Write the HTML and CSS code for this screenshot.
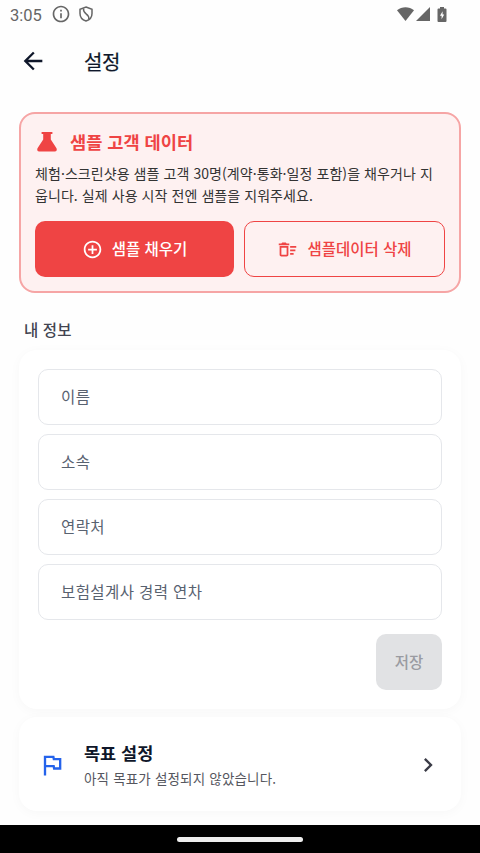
FILE: index.html
```html
<!DOCTYPE html>
<html lang="ko">
<head>
<meta charset="utf-8">
<title>설정</title>
<link rel="stylesheet" href="styles.css">
</head>
<body>
<div class="screen">
  <div class="status">
    <span class="clock">3:05</span>
    <svg class="st-info" viewBox="0 0 24 24"><path d="M11 7h2v2h-2zm0 4h2v6h-2zm1-9C6.480 2 2 6.480 2 12s4.480 10 10 10 10-4.480 10-10S17.520 2 12 2zm0 18c-4.410 0-8-3.590-8-8s3.590-8 8-8 8 3.590 8 8-3.590 8-8 8z"/></svg>
    <svg class="st-shield" viewBox="0 0 14 16"><path d="M7 1 13 3.200V7.500C13 11 10.500 14 7 15 3.500 14 1 11 1 7.500V3.200Z"/><path d="M4.600 2.500C3.400 8.500 10.600 7 9.800 13"/></svg>
    <span class="spacer"></span>
    <svg class="st-wifi" viewBox="0 0 17 14"><path d="M0 3.300C4.800-.9 12.200-.9 17 3.300L8.500 14Z"/></svg>
    <svg class="st-signal" viewBox="0 0 14 14"><path d="M14 0v14H0Z"/></svg>
    <svg class="st-battery" viewBox="0 0 10 15"><path fill-rule="evenodd" d="M3 0h4v1.500h1.500q1 0 1 1V14q0 1-1 1h-7q-1 0-1-1V2.500q0-1 1-1H3ZM5.600 4.200 3 8.800h1.600v3.400L7.200 7.600H5.600Z"/></svg>
  </div>
  <header class="appbar">
    <svg class="back" viewBox="0 0 24 24"><path d="M20 11H7.830l5.590-5.590L12 4l-8 8 8 8 1.410-1.410L7.830 13H20v-2z"/></svg>
    <h1>설정</h1>
  </header>
  <main>
    <section class="sample">
      <div class="sample-head">
        <svg class="flask" viewBox="0 0 20 20"><path d="M4.600 0H15.400V2H13.800V7.600L19.500 16.300Q20.500 19.300 18 19.500H2Q-.5 19.300.5 16.300L6.200 7.600V2H4.600Z"/></svg>
        <h2>샘플 고객 데이터</h2>
      </div>
      <p class="desc">체험·스크린샷용 샘플 고객 30명(계약·통화·일정 포함)을 채우거나 지<br>웁니다. 실제 사용 시작 전엔 샘플을 지워주세요.</p>
      <div class="actions">
        <button class="btn fill">
          <svg viewBox="0 0 24 24"><path d="M13 7h-2v4H7v2h4v4h2v-4h4v-2h-4V7zm-1-5C6.480 2 2 6.480 2 12s4.480 10 10 10 10-4.480 10-10S17.520 2 12 2zm0 18c-4.410 0-8-3.590-8-8s3.590-8 8-8 8 3.590 8 8-3.590 8-8 8z"/></svg>
          <span>샘플 채우기</span>
        </button>
        <button class="btn outline">
          <svg viewBox="0 0 24 24"><path d="M15 16h4v2h-4zm0-8h7v2h-7zm0 4h6v2h-6zM3 18c0 1.100.9 2 2 2h6c1.100 0 2-.9 2-2V8H3v10zm2-8h6v8H5v-8zm5-6H6L5 5H2v2h12V5h-3z"/></svg>
          <span>샘플데이터 삭제</span>
        </button>
      </div>
    </section>
    <h3>내 정보</h3>
    <section class="card form">
      <div class="field">이름</div>
      <div class="field">소속</div>
      <div class="field">연락처</div>
      <div class="field">보험설계사 경력 연차</div>
      <button class="save">저장</button>
    </section>
    <section class="card goal">
      <svg class="flag" viewBox="0 0 24 24"><path d="M12.360 6l.4 2H18v6h-3.360l-.4-2H7V6h5.360M14 4H5v17h2v-7h5.600l.4 2h7V6h-5.600L14 4z"/></svg>
      <div class="goal-text">
        <strong>목표 설정</strong>
        <span>아직 목표가 설정되지 않았습니다.</span>
      </div>
      <svg class="chevron" viewBox="0 0 24 24"><path d="M10 6 8.590 7.410 13.170 12l-4.580 4.590L10 18l6-6z"/></svg>
    </section>
  </main>
  <footer class="navbar"><span></span></footer>
</div>
</body>
</html>
```
FILE: styles.css
```css
* { box-sizing: border-box; }
body {
  margin: 0;
  background: #fefefe;
  font-family: "Noto Sans CJK KR", sans-serif;
  color: #0f172a;
}
svg { display: block; flex: none; fill: currentColor; }
h1, h2, h3, p { margin: 0; }
button { font-family: inherit; border: 0; padding: 0; }
.screen {
  width: 480px;
  height: 853px;
  display: flex;
  flex-direction: column;
  overflow: hidden;
  white-space: nowrap;
}
.status {
  height: 28px;
  padding: 0 33px 0 10px;
  display: flex;
  align-items: center;
  color: #666;
}
.clock {
  width: 42px;
  font: 16.5px/28px Roboto, sans-serif;
  padding-top: 3px;
}
.st-info { width: 20px; height: 20px; margin-left: -1px; }
.st-shield {
  width: 14px; height: 16px; margin-left: 8px;
  fill: none; stroke: currentColor; stroke-width: 1.500;
}
.spacer { flex: 1; }
.st-wifi { width: 17px; height: 14px; }
.st-signal { width: 14px; height: 14px; margin-left: 2px; }
.st-battery { width: 10px; height: 15px; margin-left: 7.500px; }
.appbar {
  height: 66px;
  padding-left: 19px;
  display: flex;
  align-items: center;
}
.back { width: 28px; height: 28px; }
h1 { margin-left: 37px; font-size: 20px; font-weight: 400; line-height: 28px; padding-top: 1px; -webkit-text-stroke: 0.2px; letter-spacing: -0.3px; }
main { flex: 1; padding: 18px 19px 0; }
.sample {
  height: 181px;
  padding: 17px 14px 0;
  border: 2px solid #f6a5a5;
  border-radius: 16px;
  background: #fef1f1;
}
.sample-head { display: flex; align-items: center; height: 21px; color: #ef4444; }
.flask { width: 20px; height: 20px; margin-left: 2px; }
h2 { margin-left: 13px; font-size: 17.600px; font-weight: 700; line-height: 21px; }
.desc { margin-top: 10px; font-size: 14px; line-height: 22px; letter-spacing: 0.070px; color: #333; }
.actions { display: flex; gap: 10px; margin-top: 15px; }
.btn {
  flex: 1;
  height: 56px;
  border-radius: 10px;
  display: flex;
  align-items: center;
  justify-content: center;
  gap: 9px;
  font-size: 15.500px;
  font-weight: 500;
}
.btn span { padding-bottom: 2px; }
.btn svg { width: 21px; height: 21px; }
.fill { background: #ef4444; color: #fff; }
.outline { background: transparent; border: 1px solid #ef4444; color: #ef4444; }
h3 { margin: 25px 0 0 5px; font-size: 15.500px; font-weight: 500; line-height: 23px; color: #424450; letter-spacing: 0.1px; }
.card {
  background: #fff;
  border-radius: 18px;
  box-shadow: 0 2px 12px rgba(0, 0, 0, 0.03);
}
.form {
  margin-top: 9px;
  height: 359px;
  padding: 18.500px 19px;
  display: flex;
  flex-direction: column;
  gap: 9.330px;
}
.field {
  height: 56px;
  flex: none;
  border: 1px solid #e5e7eb;
  border-radius: 10px;
  padding-left: 22px;
  font-size: 15.500px;
  line-height: 53px;
  letter-spacing: 0.400px;
  color: #596270;
}
.save {
  align-self: flex-end;
  width: 66px;
  height: 56px;
  margin-top: 4px;
  padding-bottom: 2px;
  border-radius: 10px;
  background: #e1e2e4;
  color: #9a9ba1;
  font-size: 15.500px;
  font-weight: 500;
}
.goal {
  margin-top: 8px;
  height: 94px;
  padding: 0 19px;
  display: flex;
  align-items: center;
}
.flag { width: 28px; height: 28px; margin-top: 1px; color: #2563eb; }
.goal-text { flex: 1; margin-left: 18px; display: flex; flex-direction: column; }
.goal-text strong { font-size: 17.500px; line-height: 25px; padding-bottom: 2px; font-weight: 700; }
.goal-text span { font-size: 13.500px; line-height: 22px; letter-spacing: 0.180px; color: #55565e; }
.chevron { width: 28px; height: 28px; margin-top: 2px; color: #3b3c47; }
.navbar {
  height: 28px;
  background: #000;
  display: flex;
  align-items: center;
  justify-content: center;
}
.navbar span { width: 126px; height: 5px; border-radius: 3px; background: #eee; }
```
